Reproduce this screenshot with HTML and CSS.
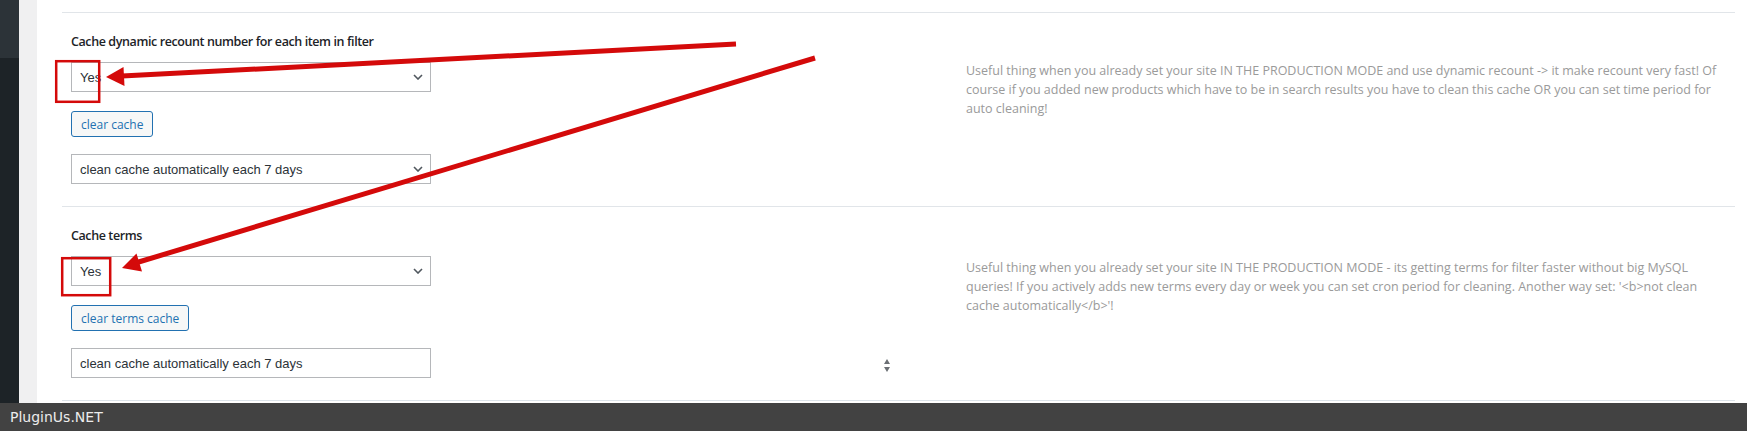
FILE: index.html
```html
<!DOCTYPE html>
<html lang="en">
<head>
  <meta charset="UTF-8">
  <title>Cache options</title>
  <link rel="stylesheet" href="styles.css">
</head>
<body>

  <div class="screen">
    <aside class="adminmenu"><div class="adminmenu-top"></div></aside>
    <div class="gutter"></div>

    <main class="content">
      <section class="option">
        <div class="option-controls">
          <h4>Cache dynamic recount number for each item in filter</h4>
          <select class="field"><option>Yes</option><option>No</option></select>
          <button class="btn">clear cache</button>
          <select class="field"><option>clean cache automatically each 7 days</option></select>
        </div>
        <p class="option-desc">Useful thing when you already set your site IN THE PRODUCTION MODE and use dynamic recount -&gt; it make recount very fast! Of course if you added new products which have to be in search results you have to clean this cache OR you can set time period for auto cleaning!</p>
      </section>

      <section class="option">
        <div class="option-controls">
          <h4>Cache terms</h4>
          <select class="field"><option>Yes</option><option>No</option></select>
          <button class="btn">clear terms cache</button>
          <div class="field-row">
            <input class="field" type="text" value="clean cache automatically each 7 days">
            <svg class="spinner" width="8" height="14" viewBox="0 0 8 14">
              <path d="M4 0 L7 5 L1 5 Z" fill="#6b6f74"/>
              <path d="M1 8 L7 8 L4 13 Z" fill="#6b6f74"/>
            </svg>
          </div>
        </div>
        <p class="option-desc second">Useful thing when you already set your site IN THE PRODUCTION MODE - its getting terms for filter faster without big MySQL queries! If you actively adds new terms every day or week you can set cron period for cleaning. Another way set: '&lt;b&gt;not clean cache automatically&lt;/b&gt;'!</p>
      </section>
    </main>
  </div>

  <footer class="brand">PluginUs.NET</footer>

  <!-- annotation marks drawn over the screenshot -->
  <svg class="marks" width="1747" height="431" viewBox="0 0 1747 431">
    <g fill="none" stroke="#d40a0a">
      <rect x="56.2" y="61.2" width="43" height="40.6" stroke-width="2.5"/>
      <rect x="62.2" y="258.2" width="48" height="37" stroke-width="2.5"/>
      <line x1="122" y1="76.1" x2="736" y2="44" stroke-width="5"/>
      <line x1="137" y1="262.5" x2="815" y2="58" stroke-width="5"/>
    </g>
    <g fill="#d40a0a">
      <polygon points="106,77 124.5,86 123.5,67"/>
      <polygon points="122,268 142,271.5 136.5,253.5"/>
    </g>
  </svg>

</body>
</html>
```

FILE: styles.css
```css
body {
  margin: 0;
  background: #fff;
  font-family: "Open Sans", Arial, sans-serif;
  position: relative;
  width: 1747px;
  height: 431px;
  overflow: hidden;
}

.screen {
  display: flex;
  height: 403px;
}

.adminmenu {
  width: 19px;
  background: #1d2327;
}

.adminmenu-top {
  height: 58px;
  background: #2c3338;
}

.gutter {
  width: 18px;
  background: #f0f0f1;
}

.content {
  flex: 1;
  padding: 12px 12px 0 25px;
}

.option {
  display: grid;
  grid-template-columns: 895px 1fr;
  border-top: 1px solid #e1e5e9;
  padding: 20px 0 22px 9px;
}

.option + .option {
  border-bottom: 1px solid #dde4ea;
  padding-bottom: 22px;
}

.option-controls {
  display: flex;
  flex-direction: column;
  align-items: flex-start;
}

.option-controls h4 {
  margin: 0 0 11px;
  font-size: 12.5px;
  line-height: 18px;
  font-weight: 600;
  color: #1d2327;
  letter-spacing: -0.4px;
}

.field {
  box-sizing: border-box;
  width: 360px;
  height: 30px;
  margin: 0;
  padding: 0 8px;
  border: 1px solid #b5b7ba;
  border-radius: 0;
  background: #fff;
  color: #2c3338;
  font-family: "Liberation Sans", Arial, sans-serif;
  font-size: 13px;
  outline: none;
}

select.field {
  -webkit-appearance: none;
  appearance: none;
  background-image: url("data:image/svg+xml;utf8,<svg xmlns='http://www.w3.org/2000/svg' width='10' height='6' viewBox='0 0 10 6'><path d='M1 1 L5 5 L9 1' fill='none' stroke='%2350575e' stroke-width='1.6'/></svg>");
  background-repeat: no-repeat;
  background-position: right 7px center;
}

.btn {
  margin: 19px 0 17px;
  height: 26px;
  padding: 0 9px;
  border: 1px solid #2271b1;
  border-radius: 3px;
  background: #f6f7f7;
  color: #2271b1;
  font-family: "Open Sans", Arial, sans-serif;
  font-size: 12px;
  cursor: pointer;
}

.field-row {
  display: flex;
  align-items: center;
}

.spinner {
  margin: 5px 0 0 452px;
}

.option-desc {
  max-width: 790px;
  margin: 0;
  padding-top: 28px;
  font-size: 12.5px;
  line-height: 19px;
  color: #9a9a9a;
}

.option-desc.second {
  max-width: 735px;
  padding-top: 31px;
}

.brand {
  height: 28px;
  line-height: 28px;
  padding-left: 10px;
  background: #424242;
  color: #ececec;
  font-family: "DejaVu Sans", Verdana, sans-serif;
  font-size: 14px;
}

.marks {
  position: absolute;
  top: 0;
  left: 0;
  pointer-events: none;
}
```
